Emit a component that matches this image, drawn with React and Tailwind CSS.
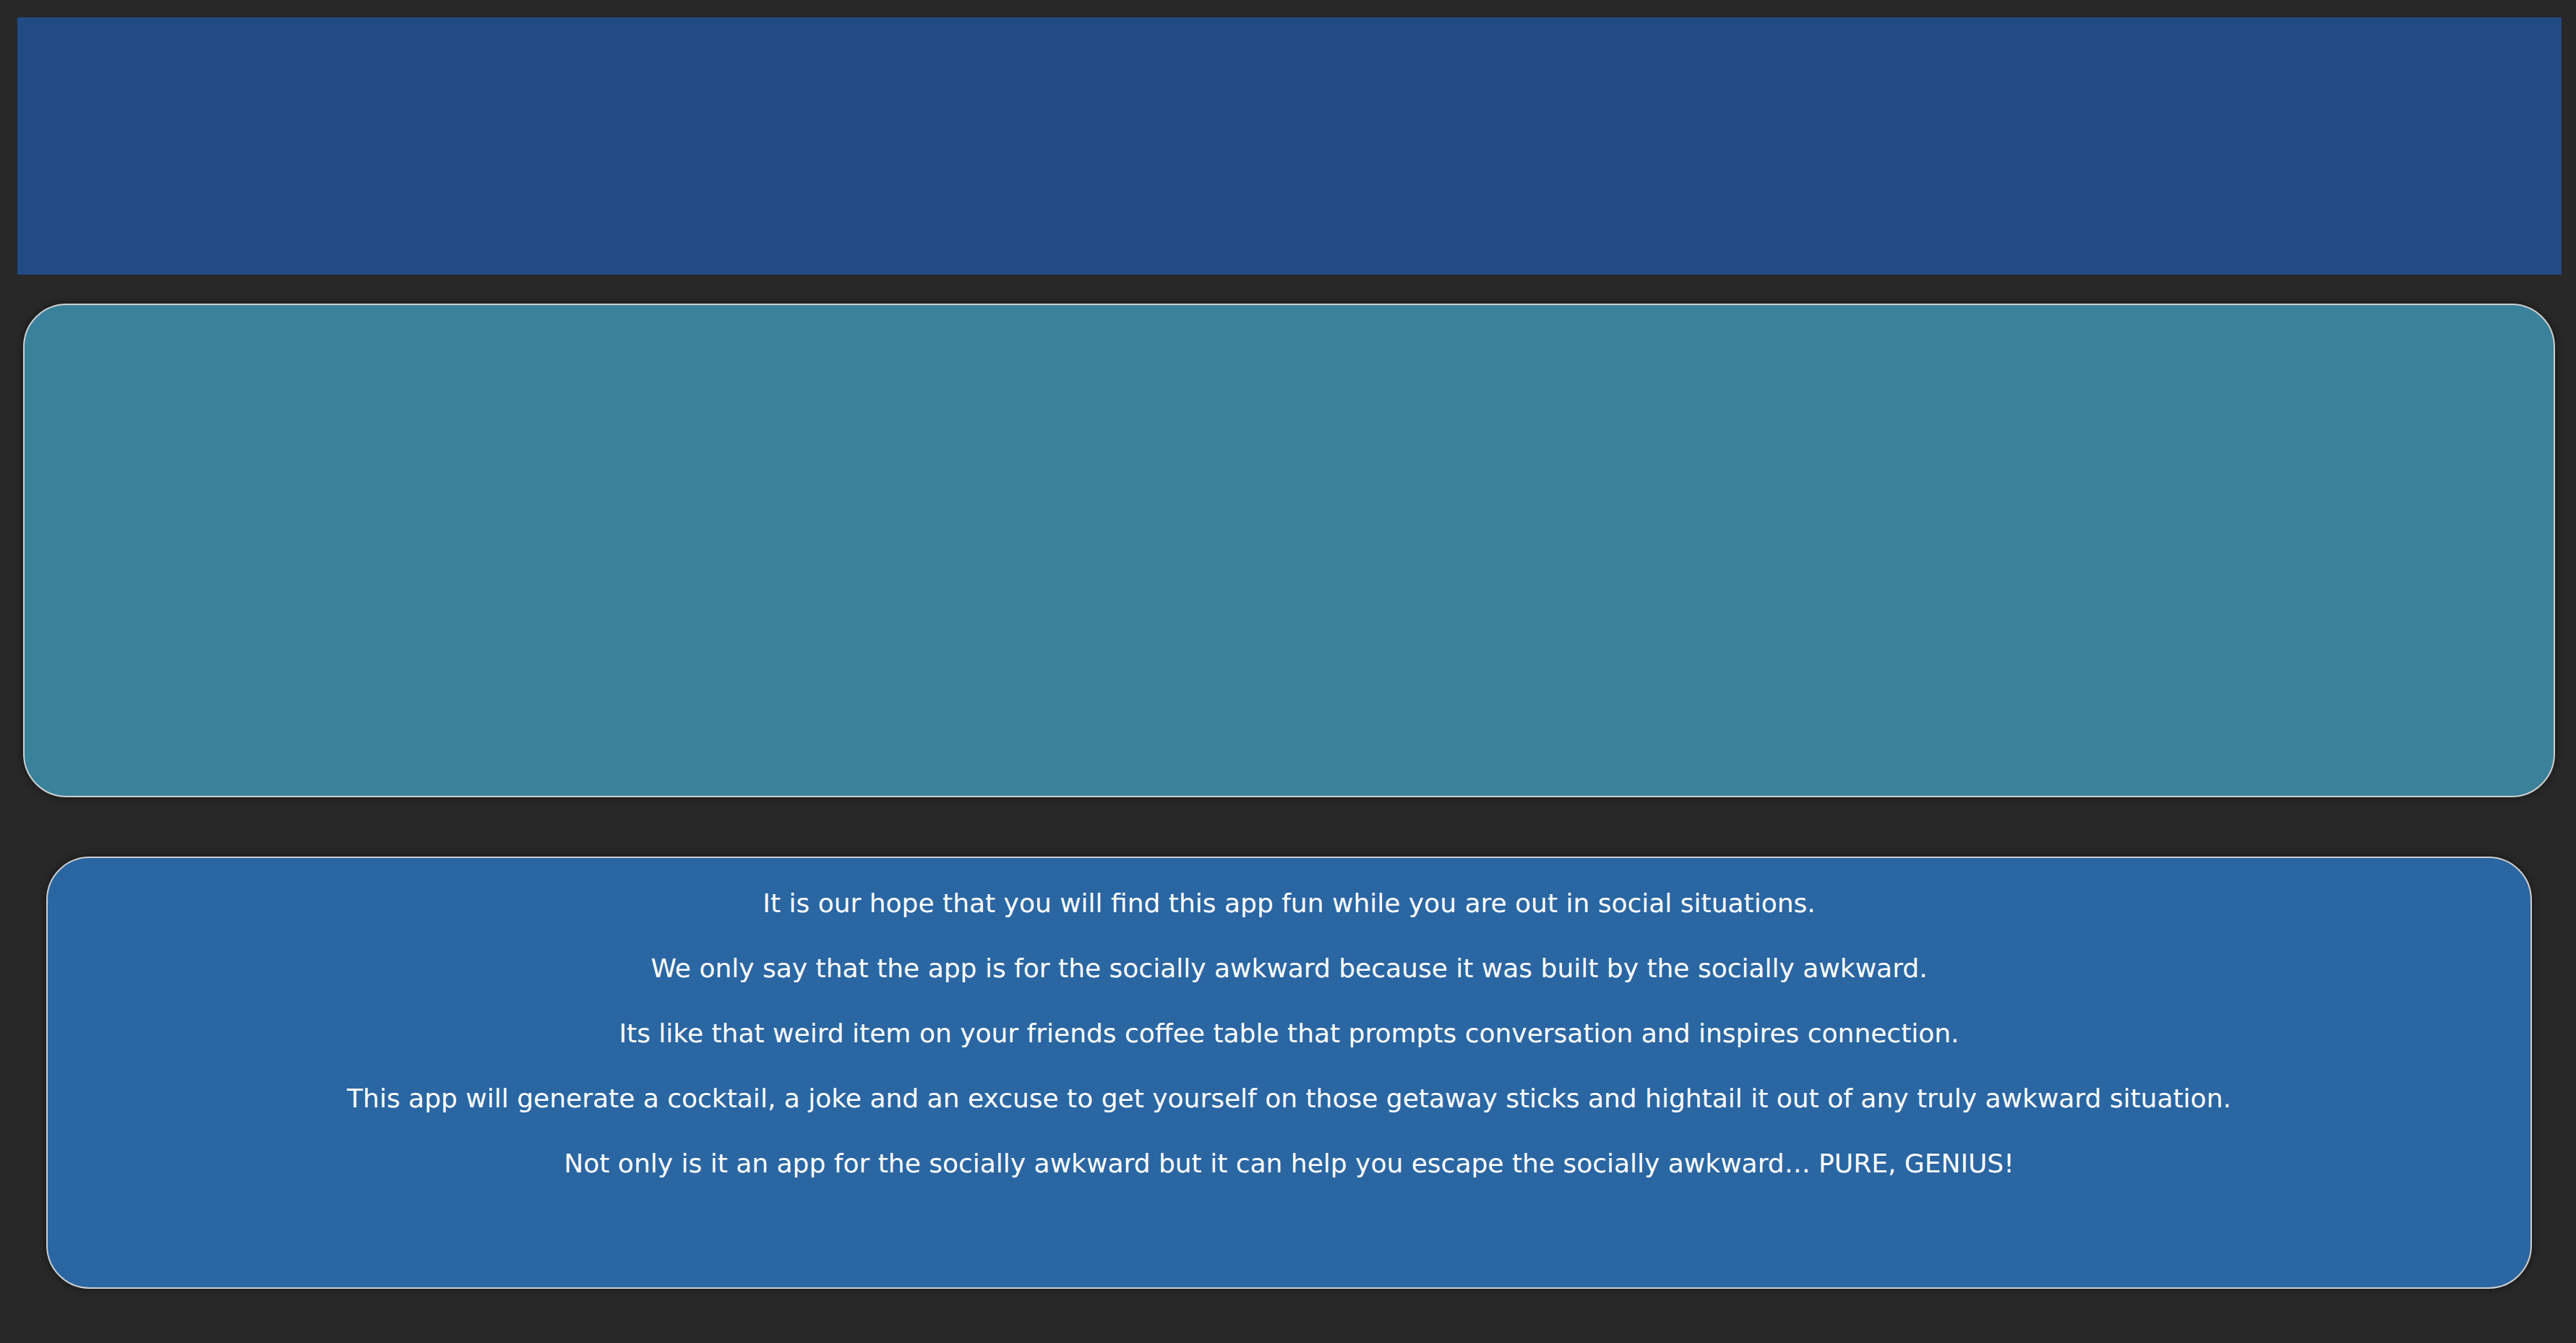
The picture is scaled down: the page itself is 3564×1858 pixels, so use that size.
export default function App() {
  const lines = [
    "It is our hope that you will find this app fun while you are out in social situations.",
    "We only say that the app is for the socially awkward because it was built by the socially awkward.",
    "Its like that weird item on your friends coffee table that prompts conversation and inspires connection.",
    "This app will generate a cocktail, a joke and an excuse to get yourself on those getaway sticks and hightail it out of any truly awkward situation.",
    "Not only is it an app for the socially awkward but it can help you escape the socially awkward… PURE, GENIUS!",
  ];
  return (
    <div
      className="min-h-[1858px] w-full bg-[#282828] pt-[24px] pb-[75px]"
      style={{ fontFamily: '"DejaVu Sans", Verdana, sans-serif' }}
    >
      <header className="ml-[24px] mr-[20px] h-[356px] bg-[#224a84]" />
      <section className="mt-[40px] ml-[32px] mr-[29px] h-[683px] rounded-[60px] border-2 border-[#cfcfcf] bg-[#3a829c] shadow-[0_0_12px_rgba(0,0,0,0.45)]" />
      <section className="mt-[82px] ml-[64px] mr-[61px] h-[598px] rounded-[60px] border-2 border-[#cfcfcf] bg-[#2a66a2] text-center text-white shadow-[0_0_12px_rgba(0,0,0,0.45)]">
        {lines.map((t, i) => (
          <p key={i} className="my-[36px] text-[36px] leading-[54px]">
            {t}
          </p>
        ))}
      </section>
    </div>
  );
}
